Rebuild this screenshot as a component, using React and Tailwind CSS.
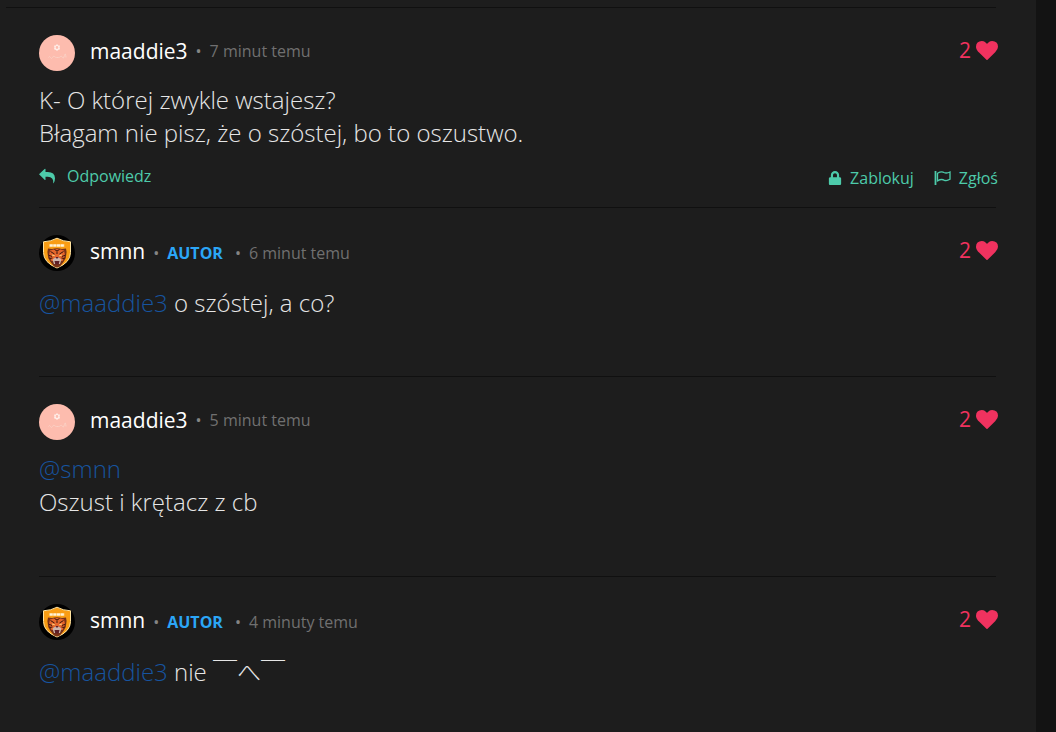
import { FaLock } from 'react-icons/fa'

const COMMENTS = [
  {
    id: 1,
    user: 'maaddie3',
    time: '7 minut temu',
    likes: 2,
    lines: ['K- O której zwykle wstajesz?', 'Błagam nie pisz, że o szóstej, bo to oszustwo.'],
    actions: true,
  },
  { id: 2, user: 'smnn', author: true, time: '6 minut temu', likes: 2, mention: 'maaddie3', lines: [' o szóstej, a co?'] },
  { id: 3, user: 'maaddie3', time: '5 minut temu', likes: 2, mention: 'smnn', lines: ['', 'Oszust i krętacz z cb'] },
  { id: 4, user: 'smnn', author: true, time: '4 minuty temu', likes: 2, mention: 'maaddie3', lines: [' nie ￣へ￣'] },
]

function FlowerAvatar() {
  return (
    <svg viewBox="0 0 36 36" className="size-9 shrink-0" aria-hidden="true">
      <circle cx="18" cy="18" r="18" fill="#fdbcae" />
      <g fill="none" stroke="#fff1ec">
        <circle cx="18" cy="12.5" r="2" strokeWidth="1.2" />
        <path
          d="M18 9.200v1.400M18 14.600v1.400M15 10.800l1.300.8M19.700 13.400l1.300.8M15 14.200l1.300-.8M19.700 11.600l1.300-.8"
          strokeWidth="1"
        />
      </g>
      <path d="M9.500 22.500q1-2 2 0t2 0 2-1 2 1 2 0 2-1 2 1 2-2 1.500 2" fill="none" stroke="#fbd0c4" strokeWidth="1" />
    </svg>
  )
}

function TigerAvatar() {
  return (
    <svg viewBox="0 0 36 36" className="size-9 shrink-0" aria-hidden="true">
      <circle cx="18" cy="18" r="18" fill="#000" />
      <path
        d="M18 3.200q6 3.300 13.500 3.600v10.700q0 10-13.500 15.500Q4.500 27.500 4.500 17.500V6.800Q12 6.500 18 3.200z"
        fill="#f99d14"
        stroke="#ffe3a0"
        strokeWidth="1"
      />
      {/* wordmark */}
      <path d="M10.500 10.500h15" stroke="#fff3d8" strokeWidth="2.400" strokeDasharray="3.300 .4" />
      {/* head */}
      <path
        d="M9 13.500l4 .5q5-1.600 10 0l4-.5.6 3.500-.8 6-2.300 4-3.500 4.500-3 1-3-1-3.500-4.500-2.300-4-.8-6z"
        fill="#7a3218"
      />
      <path d="M11 15.500q7-3 14 0l1 4.500-2.500 6h-11L10 20z" fill="#e5662c" />
      <path
        d="M15.500 14.500l2.500 1.500 2.500-1.500M18 16.500v2.500M11.500 16.500l4 2.500M24.500 16.500l-4 2.500M9.500 20l3.500 1.500M26.500 20L23 21.500M10.500 23.500l3-.5M25.500 23.500l-3-.5"
        fill="none"
        stroke="#35160f"
        strokeWidth="1"
      />
      <path d="M13 20l2.800.8M23 20l-2.800.8" stroke="#ffd27a" strokeWidth="1" />
      <path d="M13.500 24.500l3.500-2.500h2l3.500 2.500-1.500 4.500h-6z" fill="#cdb5ad" />
      <path d="M16.300 22h3.400L18 24zM15.500 26h5l-.8 3.500h-3.400z" fill="#5e2028" />
    </svg>
  )
}

function HeartIcon() {
  return (
    <svg viewBox="0 128 1792 1536" className="h-[19px] w-[22px]" fill="currentColor" aria-hidden="true">
      <path d="M896 1664q-26 0-44-18l-624-602q-10-8-27.500-26T145 952.500 77 855 23.500 734 0 596q0-220 127-344t351-124q62 0 126.500 21.500t120 58T820 276t76 68q36-36 76-68t95.500-68.500 120-58T1314 128q224 0 351 124t127 344q0 221-229 450l-623 600q-18 18-44 18z" />
    </svg>
  )
}

function ReplyIcon() {
  return (
    <svg viewBox="0 0 16 16" className="size-4" fill="currentColor" aria-hidden="true">
      <path d="M0 6.300L5.600.9q.9-.7.9.4v2.600h2.300q7 0 7.200 6.300 0 2.300-1.200 4.900-.4.500-.5-.1.400-6-5.500-6.200H6.500v2.600q0 1.100-.9.400z" />
    </svg>
  )
}

function FlagIcon() {
  return (
    <svg viewBox="0 0 17 16" className="h-4 w-[17px]" fill="none" stroke="currentColor" aria-hidden="true">
      <path d="M1.500 1v14" strokeWidth="1.800" />
      <path d="M3.500 3.300q4-2.300 6.500-.8 2.500 1.200 6-.5v7.300q-3.500 2-6 .8-2.500-1.500-6.500.8z" strokeWidth="1.300" />
    </svg>
  )
}

function Dot() {
  return <span className="text-base text-[#858585]">•</span>
}

function Comment({ comment }) {
  const { user, author, time, likes, mention, lines, actions } = comment

  return (
    <article className="mr-[2px] border-b border-[#101010] pt-[27px]">
      <header className={`-mr-[2px] flex items-start justify-between ${author ? 'mb-[15px]' : 'mb-3'}`}>
        <div className="flex items-start">
          {author ? <TigerAvatar /> : <FlowerAvatar />}
          <div className={`ml-[15px] flex h-8 ${author ? 'items-baseline' : 'items-center'}`}>
            <a href={`#${user}`} className="text-[21px] leading-8 text-white">{user}</a>
            <span className="ml-2 flex items-baseline gap-2">
              <Dot />
              {author && <strong className="mr-1 text-base font-bold text-[#2ba6f7]">AUTOR</strong>}
              {author && <Dot />}
              <time className="text-base text-[#707070]">{time}</time>
            </span>
          </div>
        </div>
        <button
          type="button"
          aria-label={`Polubienia: ${likes}`}
          className="flex h-[30px] items-center gap-[5px] text-[21px] leading-8 text-[#f0325f]"
        >
          {likes}
          <HeartIcon />
        </button>
      </header>

      <p className="text-2xl leading-[33px] font-light text-[#e6e6e6]">
        {lines.map((line, i) => (
          <span key={i}>
            {i > 0 && <br />}
            {i === 0 && mention && <a href={`#${mention}`} className="text-[#17549f]">@{mention}</a>}
            {line}
          </span>
        ))}
      </p>

      <footer
        className={`-mr-[2px] flex items-center justify-between text-base text-[#4dcbaa] ${author ? 'h-[57px]' : 'h-[58px]'}`}
      >
        {actions && (
          <>
            <button type="button" className="mb-1 flex items-center gap-3">
              <ReplyIcon />
              Odpowiedz
            </button>
            <div className="flex gap-5">
              <button type="button" className="flex items-center gap-2">
                <FaLock className="size-[14px]" />
                Zablokuj
              </button>
              <button type="button" className="flex items-center gap-2">
                <FlagIcon />
                Zgłoś
              </button>
            </div>
          </>
        )}
      </footer>
    </article>
  )
}

export default function App() {
  return (
    <div className="min-h-screen bg-[#131313] pr-5 font-['Open_Sans','Noto_Sans_CJK_JP',sans-serif]">
      <main className="min-h-screen bg-[#1d1d1d] pt-[7px]">
        <hr className="mr-10 ml-[6px] border-[#101010]" />
        <div className="mr-[38px] ml-[39px]">
          {COMMENTS.map(c => (
            <Comment key={c.id} comment={c} />
          ))}
        </div>
      </main>
    </div>
  )
}
